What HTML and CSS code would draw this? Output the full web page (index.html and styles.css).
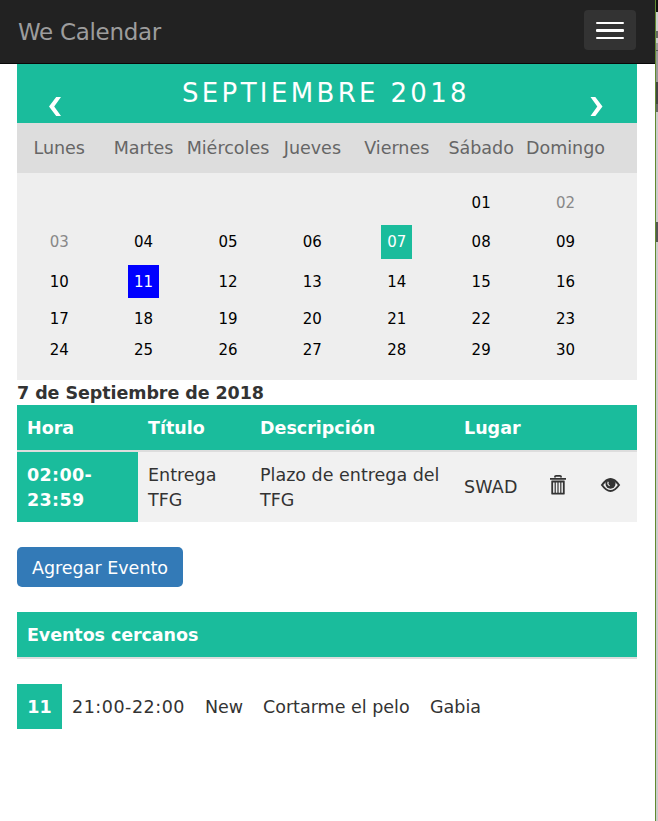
FILE: index.html
```html
<!DOCTYPE html>
<html lang="es">
<head>
<meta charset="utf-8">
<title>We Calendar</title>
<link rel="stylesheet" href="styles.css">
</head>
<body>
<div class="page">
  <nav class="navbar">
    <a class="brand">We Calendar</a>
    <button class="toggle" aria-label="Menu"><span></span><span></span><span></span></button>
  </nav>
  <main class="content">
    <header class="month">
      <svg class="arrow" viewBox="0 0 13 20"><path d="M7.2 0H12L5.2 9.5L12 19H7.2L0 9.5Z"/></svg>
      <h1>SEPTIEMBRE 2018</h1>
      <svg class="arrow" viewBox="0 0 13 20"><path d="M5.3 0H.5L7.3 9.5L.5 19H5.3L12.5 9.5Z"/></svg>
    </header>
    <div class="weekdays"><span>Lunes</span><span>Martes</span><span>Miércoles</span><span>Jueves</span><span>Viernes</span><span>Sábado</span><span>Domingo</span></div>
    <div class="days">
      <span></span><span></span><span></span><span></span><span></span><span>01</span><span class="muted">02</span>
      <span class="muted">03</span><span>04</span><span>05</span><span>06</span><span class="marked"><b class="active">07</b></span><span>08</span><span>09</span>
      <span>10</span><span class="marked"><b class="event">11</b></span><span>12</span><span>13</span><span>14</span><span>15</span><span>16</span>
      <span>17</span><span>18</span><span>19</span><span>20</span><span>21</span><span>22</span><span>23</span>
      <span>24</span><span>25</span><span>26</span><span>27</span><span>28</span><span>29</span><span>30</span>
    </div>
    <h2 class="date">7 de Septiembre de 2018</h2>
    <table class="events">
      <colgroup><col class="c1"><col class="c2"><col class="c3"><col class="c4"><col class="c5"><col class="c6"></colgroup>
      <thead><tr><th>Hora</th><th>Título</th><th>Descripción</th><th>Lugar</th><th></th><th></th></tr></thead>
      <tbody><tr>
        <th class="hour">02:00-<br>23:59</th><td>Entrega TFG</td><td>Plazo de entrega del<br>TFG</td><td class="place">SWAD</td>
        <td><svg class="trash" viewBox="0 0 16 20"><path class="bars" d="M5.2 6V18M8 6V18M10.8 6V18"/><path d="M5 2.5V1.6Q5 .9 6 .9H10Q11 .9 11 1.6V2.5M0 3.8H16M1.5 6.5H14.5M1.5 18.7H14.5M2.2 6V19M13.8 6V19"/></svg></td>
        <td><svg class="eye" viewBox="0 0 19 14"><path class="lid" d="M1 7Q9.5-5 18 7Q9.5 19 1 7Z"/><circle cx="9.5" cy="5.8" r="5"/><path class="glint" d="M7.3 3.8Q6 6.5 8.6 7.7"/></svg></td>
      </tr></tbody>
    </table>
    <button class="add">Agregar Evento</button>
    <h3 class="near">Eventos cercanos</h3>
    <div class="upcoming"><b>11</b><span class="time">21:00-22:00</span><span class="name">New</span><span class="detail">Cortarme el pelo</span><span>Gabia</span></div>
  </main>
</div>
<div class="edge"></div>
</body>
</html>
```
FILE: styles.css
```css
* { box-sizing: border-box; }
body {
  margin: 0; height: 821px; overflow: hidden; display: flex; background: #fff;
  font: 17.5px/25px Verdana, "DejaVu Sans", sans-serif; color: #333;
}
.page { width: 655px; }
.navbar {
  height: 64px; padding: 0 19px 0 18px; background: #222; border-bottom: 1px solid #080808;
  display: flex; align-items: center; justify-content: space-between;
}
.brand { padding-top: 1px; color: #9d9d9d; font-size: 23px; letter-spacing: -.3px; }
.toggle {
  width: 52px; height: 40px; margin-bottom: 3px; padding: 1px 12px 0; border: 0; border-radius: 4px; background: #333;
  display: flex; flex-direction: column; justify-content: center; gap: 5px;
}
.toggle span { height: 2px; border-radius: 1px; background: #fff; }
.toggle span:nth-child(2) { height: 3px; }
.content { margin: 0 18px 0 17px; }
.month { height: 59px; background: #1abc9c; color: #fff; display: flex; justify-content: space-between; padding: 0 34px 0 32px; }
.month h1 { margin: 15px 0 0; font-size: 26px; line-height: 28px; font-weight: 400; letter-spacing: 3.35px; }
.arrow { width: 13px; height: 20px; margin-top: 33px; fill: #fff; }
.weekdays { height: 50px; background: #ddd; color: #666; display: grid; grid-template-columns: repeat(7, 84.4px); line-height: 51px; }
.weekdays span { display: flex; justify-content: center; }
.days {
  height: 207px; padding-top: 10px; background: #eee; color: #000; font-size: 15px; display: grid;
  grid-template-columns: repeat(7, 84.4px); grid-template-rows: 39px 40px 39px 35px 27px;
}
.days span { display: flex; align-items: center; justify-content: center; padding-top: 1px; }
.days .marked { padding-top: 0; }
.days .muted { color: #888; }
.days b { width: 31px; height: 34px; color: #fff; font-weight: 400; display: flex; align-items: center; justify-content: center; }
.active { background: #1abc9c; }
.days .event { height: 33px; padding-top: 1px; background: #00f; }
.date { margin: 0; padding-top: 1px; font-size: 17.5px; line-height: 24px; letter-spacing: -.07px; }
.events { width: 620px; table-layout: fixed; border-collapse: separate; border-spacing: 0; }
.c1 { width: 121px; }
.c2 { width: 112px; }
.c3 { width: 204px; }
.c4 { width: 86px; }
.c5 { width: 51px; }
.c6 { width: 46px; }
th, td { padding: 11px 10px 9px; text-align: left; vertical-align: middle; }
thead th { height: 47px; background: #1abc9c; color: #fff; border-bottom: 2px solid #ddd; }
.events td { background: #f1f1f1; white-space: nowrap; }
.events td:nth-child(2) { white-space: normal; }
.events .place { padding: 10px; letter-spacing: .2px; }
.events .hour { background: #1abc9c; color: #fff; letter-spacing: .35px; }
.trash, .eye { display: block; overflow: visible; fill: none; stroke: #333; }
.trash { width: 16px; height: 20px; stroke-width: 1.8; margin-top: -6px; }
.trash .bars { stroke-width: 1.2; }
.eye { width: 19px; height: 14px; stroke-width: 2; margin-top: -6px; }
.eye circle { fill: #333; stroke: none; }
.eye .glint { stroke: #f1f1f1; stroke-width: 1.2; }
.add {
  display: block; width: 166px; height: 40px; margin: 25px 0; padding: 2px 0 0; border: 0; border-radius: 5px;
  background: #337ab7; color: #fff; font: inherit; white-space: nowrap;
}
.near { height: 47px; margin: 0 0 25px; padding: 11px 10px 9px; background: #1abc9c; color: #fff; border-bottom: 2px solid #ddd; font-size: 17.5px; line-height: 25px; letter-spacing: -.08px; }
.upcoming { display: flex; height: 45px; line-height: 46px; white-space: nowrap; }
.upcoming b { width: 45px; margin-right: 10px; background: #1abc9c; color: #fff; text-align: center; }
.time { width: 133px; letter-spacing: .53px; }
.name { width: 58px; }
.detail { width: 167px; }
.edge { width: 3px; border-left: 1px solid #628a30; background: linear-gradient(#111 0 12px, #ccc 12px 31px, #666 31px 38px, #ccc 38px 43px, #999 43px 50px, #555 50px 51px, #999 51px 82px, #444 82px 104px, #666 104px 112px, #ccc 112px 222px, #555 222px 242px, #ccc 242px); }
```
